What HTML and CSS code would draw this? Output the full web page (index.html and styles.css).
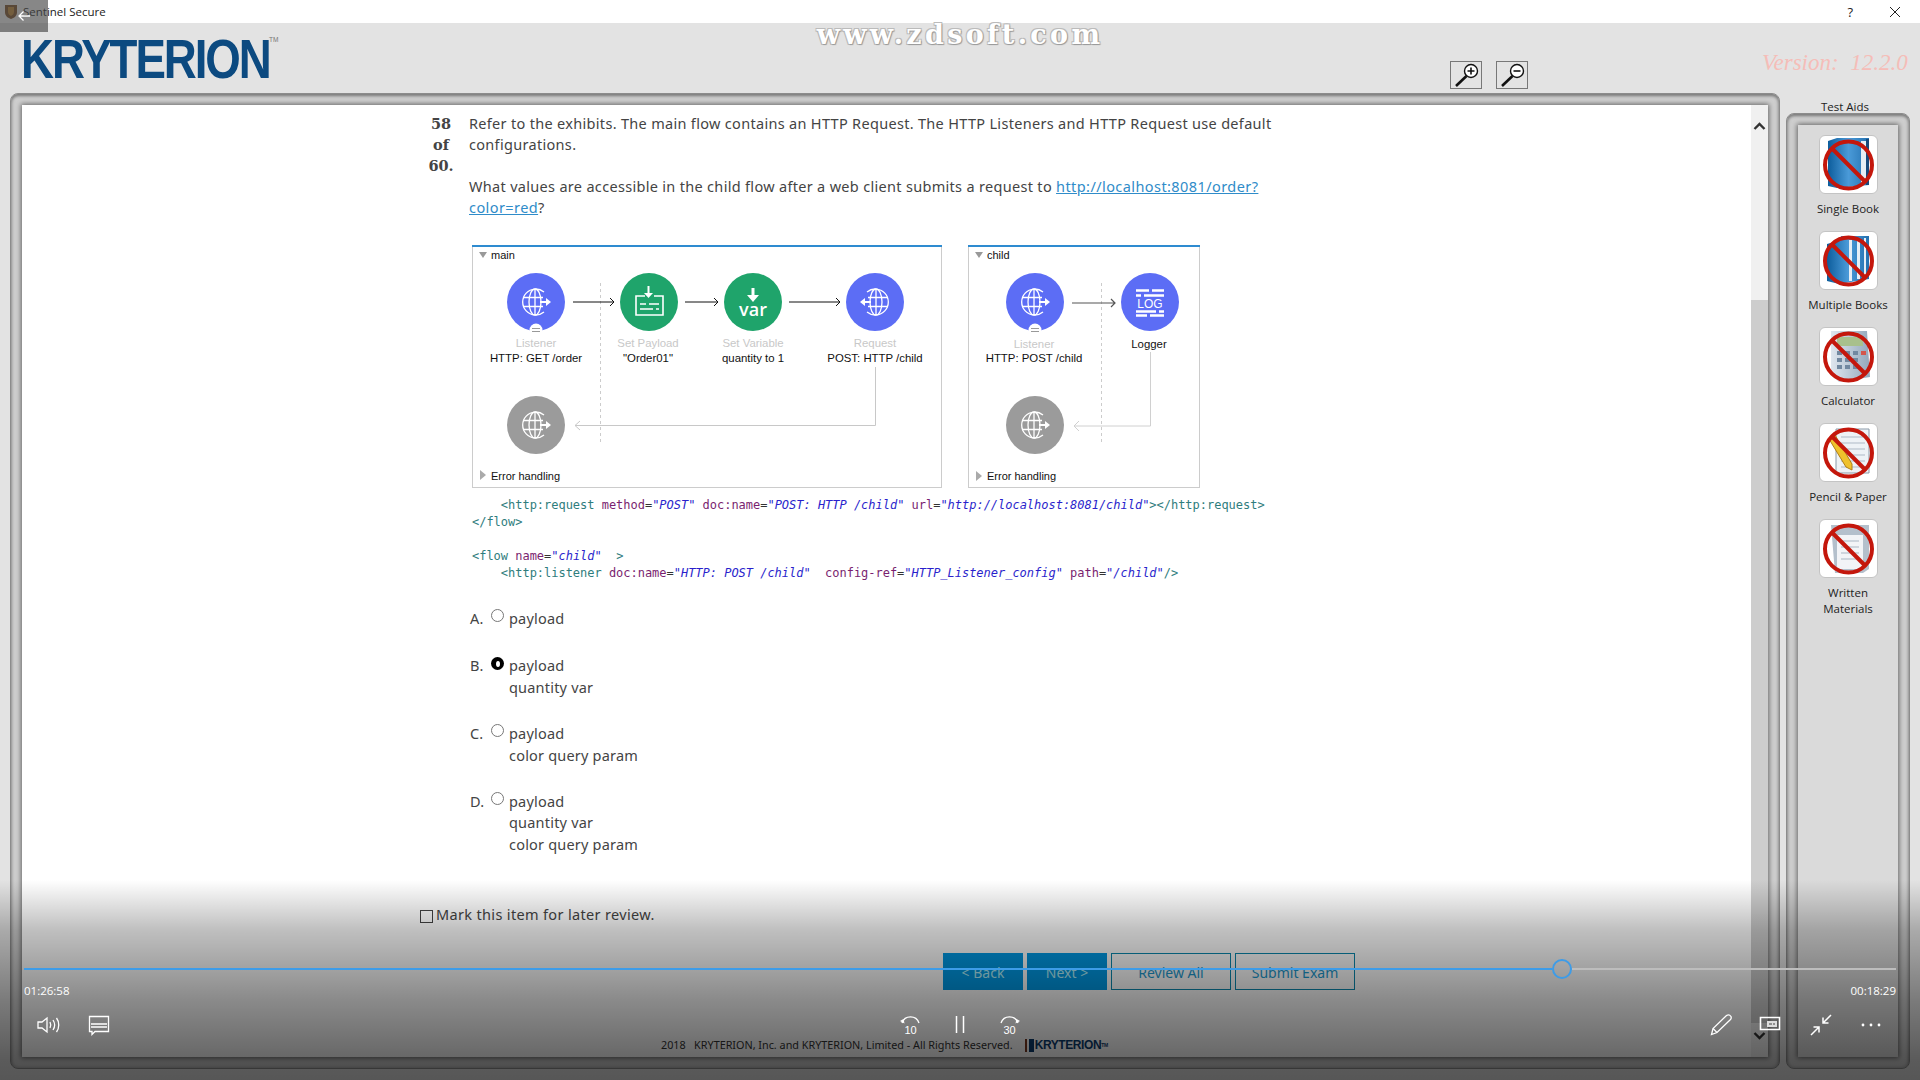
FILE: index.html
```html
<!DOCTYPE html>
<html lang="en">
<head>
<meta charset="utf-8">
<title>Sentinel Secure</title>
<link rel="stylesheet" href="styles.css">
</head>
<body>
<div class="titlebar">
  <svg class="shield" width="14" height="16" viewBox="0 0 14 16"><path d="M1 1h12v7c0 4-3 6-6 7-3-1-6-3-6-7z" fill="#7d4a1e"/><path d="M4 3h6v5c0 2-1.500 3-3 4-1.500-1-3-2-3-4z" fill="#c9892f"/></svg>
  <span class="title">Sentinel Secure</span>
  <span class="win-help">?</span>
  <svg class="win-close" width="12" height="12" viewBox="0 0 12 12"><path d="M1 1l10 10M11 1L1 11" stroke="#222" fill="none"/></svg>
</div>
<header class="header">
  <div class="logo">KRYTERION<sup class="tm">TM</sup></div>
  <div class="zooms">
    <button class="zoom-btn"><svg width="30" height="26" viewBox="0 0 30 26"><circle cx="20" cy="9" r="6.500" fill="#fff" stroke="#111" stroke-width="1.400"/><path d="M16.500 9h7M20 5.500v7" stroke="#111" stroke-width="1.600"/><path d="M15.500 14L5 24" stroke="#111" stroke-width="2.600"/></svg></button>
    <button class="zoom-btn"><svg width="30" height="26" viewBox="0 0 30 26"><circle cx="20" cy="9" r="6.500" fill="#fff" stroke="#111" stroke-width="1.400"/><path d="M16.500 9h7" stroke="#111" stroke-width="1.600"/><path d="M15.500 14L5 24" stroke="#111" stroke-width="2.600"/></svg></button>
  </div>
  <div class="version">Version: &nbsp;12.2.0</div>
</header>
<main class="workspace">
  <section class="frame main-frame">
    <div class="sheet">
      <div class="content">
        <div class="question">
          <div class="qnum">58<br>of<br>60.</div>
          <div class="qbody">
            <p class="qtext">Refer to the exhibits. The main flow contains an HTTP Request. The HTTP Listeners and HTTP Request use default<br>configurations.</p>
            <p class="qtext">What values are accessible in the child flow after a web client submits a request to <a class="link" href="#">http://localhost:8081/order?<br>color=red</a>?</p>
            <div class="exhibits">
              <svg class="flow" width="470" height="243" viewBox="472 245 470 243">
                <defs>
                  <g id="globe" fill="none" stroke="#fff" stroke-width="1.300">
                    <path d="M8-10A13 13 0 1 0 8 10"/>
                    <ellipse cx="-1" cy="0" rx="6" ry="13"/>
                    <path d="M-1-13V13M-13-4.500H7M-13 4.500H7"/>
                    <path d="M4 0H11" stroke-width="2"/>
                    <path d="M10-4L15 0L10 4z" fill="#fff" stroke="none"/>
                  </g>
                </defs>
                <rect x="472.500" y="245.500" width="469" height="242" fill="#fff" stroke="#ccc"/>
                <rect x="472" y="245" width="470" height="2" fill="#2e8bd0"/>
                <path d="M479 252h8l-4 6z" fill="#999"/>
                <text class="ft" x="491" y="259">main</text>
                <path d="M600.500 283V445" stroke="#ccc" stroke-dasharray="3 3"/>
                <circle cx="536" cy="302" r="29" fill="#5c6df5"/>
                <use href="#globe" x="536" y="302"/>
                <circle cx="536" cy="330" r="6.500" fill="#fff"/>
                <path d="M532 328.500h8M540 331.500h-8" stroke="#999"/>
                <circle cx="649" cy="302" r="29" fill="#1fa46b"/>
                <path d="M645 296h-9v19h27v-19h-9" fill="none" stroke="#fff" stroke-width="1.600"/>
                <path d="M648.500 286v9" stroke="#fff" stroke-width="2"/>
                <path d="M644 293l4.500 5 4.500-5z" fill="#fff"/>
                <path d="M640 304h6M649 304h10M640 309h13M656 309h3" stroke="#fff" stroke-width="1.500"/>
                <circle cx="753" cy="302" r="29" fill="#1fa46b"/>
                <path d="M753 288v9" stroke="#fff" stroke-width="3"/>
                <path d="M747 295h12l-6 7z" fill="#fff"/>
                <text class="var" x="753" y="316">var</text>
                <circle cx="875" cy="302" r="29" fill="#5c6df5"/>
                <use href="#globe" transform="translate(875 302) scale(-1 1)"/>
                <path d="M573 302H614M610 298l4 4-4 4M685 302H718M714 298l4 4-4 4M789 302H840M836 298l4 4-4 4" fill="none" stroke="#111"/>
                <text class="fl" x="536" y="347">Listener</text>
                <text class="fb" x="536" y="362">HTTP: GET /order</text>
                <text class="fl" x="648" y="347">Set Payload</text>
                <text class="fb" x="648" y="362">"Order01"</text>
                <text class="fl" x="753" y="347">Set Variable</text>
                <text class="fb" x="753" y="362">quantity to 1</text>
                <text class="fl" x="875" y="347">Request</text>
                <text class="fb" x="875" y="362">POST: HTTP /child</text>
                <path d="M875.500 367V425.500H575M580 421l-5 4.500 5 4.500" fill="none" stroke="#c8c8c8"/>
                <circle cx="536" cy="425" r="29" fill="#9b9b9b"/>
                <use href="#globe" x="536" y="425"/>
                <path d="M480 470l6 5-6 5z" fill="#aaa"/>
                <text class="ft" x="491" y="480">Error handling</text>
              </svg>
              <svg class="flow" width="232" height="243" viewBox="968 245 232 243">
                <rect x="968.500" y="246.500" width="231" height="241" fill="#fff" stroke="#ccc"/>
                <rect x="968" y="245" width="232" height="2" fill="#2e8bd0"/>
                <path d="M975 252h8l-4 6z" fill="#999"/>
                <text class="ft" x="987" y="259">child</text>
                <path d="M1101.500 283V445" stroke="#ccc" stroke-dasharray="3 3"/>
                <circle cx="1035" cy="302" r="29" fill="#5c6df5"/>
                <use href="#globe" x="1035" y="302"/>
                <circle cx="1035" cy="330" r="6.500" fill="#fff"/>
                <path d="M1031 328.500h8M1039 331.500h-8" stroke="#999"/>
                <circle cx="1150" cy="302" r="29" fill="#5c6df5"/>
                <path d="M1136 290.500h13M1152 290.500h12M1136 295.500h5M1144 295.500h20M1136 311.500h20M1159 311.500h5M1136 315.500h11M1150 315.500h14" stroke="#fff" stroke-width="2.400"/>
                <text class="log" x="1150" y="308">LOG</text>
                <path d="M1072 303H1115M1111 299l4 4-4 4" fill="none" stroke="#555" stroke-width="1.200"/>
                <text class="fl" x="1034" y="348">Listener</text>
                <text class="fb" x="1034" y="362">HTTP: POST /child</text>
                <text class="fb" x="1149" y="348">Logger</text>
                <path d="M1150.500 352V426H1074M1079 421l-5 5 5 5" fill="none" stroke="#d0d0d0"/>
                <circle cx="1035" cy="425" r="29" fill="#9b9b9b"/>
                <use href="#globe" x="1035" y="425"/>
                <path d="M976 471l6 5-6 5z" fill="#aaa"/>
                <text class="ft" x="987" y="480">Error handling</text>
              </svg>
            </div>
            <pre class="code"><span class="t">    &lt;http:request </span><span class="a">method</span>=<span class="v">"POST"</span> <span class="a">doc:name</span>=<span class="v">"POST: HTTP /child"</span> <span class="a">url</span>=<span class="v">"http://localhost:8081/child"</span><span class="t">&gt;&lt;/http:request&gt;</span>
<span class="t">&lt;/flow&gt;</span>

<span class="t">&lt;flow </span><span class="a">name</span>=<span class="v">"child"</span>  <span class="t">&gt;</span>
<span class="t">    &lt;http:listener </span><span class="a">doc:name</span>=<span class="v">"HTTP: POST /child"</span>  <span class="a">config-ref</span>=<span class="v">"HTTP_Listener_config"</span> <span class="a">path</span>=<span class="v">"/child"</span><span class="t">/&gt;</span></pre>
            <div class="options">
              <div class="option"><span class="letter">A.</span><span class="radio"></span><span class="otext">payload</span></div>
              <div class="option"><span class="letter">B.</span><span class="radio on"></span><span class="otext">payload<br>quantity var</span></div>
              <div class="option"><span class="letter">C.</span><span class="radio"></span><span class="otext">payload<br>color query param</span></div>
              <div class="option"><span class="letter">D.</span><span class="radio"></span><span class="otext">payload<br>quantity var<br>color query param</span></div>
            </div>
          </div>
        </div>
        <label class="mark"><span class="check"></span>Mark this item for later review.</label>
        <div class="nav">
          <button class="nbtn fill">&lt; Back</button>
          <button class="nbtn fill">Next &gt;</button>
          <button class="nbtn wide">Review All</button>
          <button class="nbtn wide">Submit Exam</button>
        </div>
        <div class="legal"><span>2018 &nbsp; KRYTERION, Inc. and KRYTERION, Limited - All Rights Reserved.</span><span class="mini-logo"><i class="mini-k"></i>KRYTERION<sup class="mini-tm">TM</sup></span></div>
      </div>
      <div class="scrollbar">
        <svg class="chev" width="17" height="17" viewBox="0 0 17 17"><path d="M3.500 11L8.500 6l5 5" fill="none" stroke="#333" stroke-width="2.400"/></svg>
        <div class="thumb"></div>
        <svg class="chev" width="17" height="17" viewBox="0 0 17 17"><path d="M3.500 6l5 5 5-5" fill="none" stroke="#333" stroke-width="2.400"/></svg>
      </div>
    </div>
  </section>
  <aside class="aids">
    <div class="aids-title">Test Aids</div>
    <div class="frame aids-frame">
      <div class="aids-list">
        <div class="aid">
          <div class="aid-box"><svg width="59" height="59" viewBox="0 0 59 59">
            <defs>
              <linearGradient id="bk" x1="0" x2="1"><stop offset="0" stop-color="#0d5d9c"/><stop offset=".5" stop-color="#4a9ad8"/><stop offset="1" stop-color="#2471b0"/></linearGradient>
              <linearGradient id="cal" x1="0" x2="1"><stop offset="0" stop-color="#dfe6ee"/><stop offset="1" stop-color="#93a8bc"/></linearGradient>
              <g id="no" fill="none" stroke="#c4170c" stroke-width="4"><circle cx="29.500" cy="30" r="23.500"/><path d="M13 13.500L46 46.500"/></g>
            </defs>
            <path d="M9 6L18 3H50V50L18 53L9 51z" fill="url(#bk)"/><path d="M42 6h5v42h-5z" fill="#e6eef5"/><path d="M47 4h3v46h-3z" fill="#174a7c"/><use href="#no"/></svg></div>
          <div class="aid-label">Single Book</div>
        </div>
        <div class="aid">
          <div class="aid-box"><svg width="59" height="59" viewBox="0 0 59 59"><path d="M8 13L22 9V5H50V48L20 53L8 50z" fill="url(#bk)"/><path d="M30 9h3v41h-3zM38 8h3v40h-3zM45 7h2v38h-2z" fill="#e6eef5"/><use href="#no"/></svg></div>
          <div class="aid-label">Multiple Books</div>
        </div>
        <div class="aid">
          <div class="aid-box"><svg width="59" height="59" viewBox="0 0 59 59"><path d="M12 4H48L51 50L20 55L12 48z" fill="url(#cal)"/><path d="M18 10L44 10V19L18 19z" fill="#a8c08c"/><path d="M18 24h5v4h-5zM26 24h5v4h-5zM34 24h5v4h-5zM18 31h5v4h-5zM26 31h5v4h-5zM34 31h5v4h-5zM18 38h5v4h-5zM26 38h5v4h-5zM34 38h5v4h-5z" fill="#7188a0"/><path d="M42 24h5v4h-5z" fill="#d4574c"/><use href="#no"/></svg></div>
          <div class="aid-label">Calculator</div>
        </div>
        <div class="aid">
          <div class="aid-box"><svg width="59" height="59" viewBox="0 0 59 59"><path d="M17 6H50V50H17z" fill="#eef2f6" stroke="#8b9aa8"/><path d="M22 14h24M22 20h24M22 26h24M22 32h24M22 38h24M22 44h24" stroke="#aeb9c6"/><path d="M10 16L16 12L33 41L33 47L27 44z" fill="#efc12c" stroke="#b17f16"/><use href="#no"/></svg></div>
          <div class="aid-label">Pencil &amp; Paper</div>
        </div>
        <div class="aid">
          <div class="aid-box"><svg width="59" height="59" viewBox="0 0 59 59"><path d="M12 6H50V50L44 54H16z" fill="#b4c0cc"/><path d="M18 16H44V50H18z" fill="#f2f4f7"/><path d="M22 22h18M22 28h18M22 34h18M22 40h18" stroke="#a9b6c3"/><use href="#no"/></svg></div>
          <div class="aid-label">Written<br>Materials</div>
        </div>
      </div>
    </div>
  </aside>
</main>
<div class="watermark">www.zdsoft.com</div>
<div class="back-tab"><svg width="14" height="12" viewBox="0 0 14 12"><path d="M13 6H2M6.500 1.500L2 6l4.500 4.500" fill="none" stroke="#fff" stroke-width="1.300"/></svg></div>
<div class="player">
  <div class="track"><div class="played"></div><div class="knob"></div><div class="rest"></div></div>
  <div class="times"><span>01:26:58</span><span>00:18:29</span></div>
  <div class="controls">
    <div class="group">
      <span class="cbtn"><svg width="24" height="24" viewBox="0 0 24 24"><path d="M1 9v6h4l5 4V5L5 9z" fill="none" stroke="#fff" stroke-width="1.300"/><path d="M13 9c1 2 1 4 0 6M16 7c2 3 2 7 0 10M19.500 5c3 4 3 10 0 14" fill="none" stroke="#fff" stroke-width="1.300"/></svg></span>
      <span class="cbtn"><svg width="24" height="24" viewBox="0 0 24 24"><path d="M2.500 3.500h19v15H8l-3 3v-3H2.500z" fill="none" stroke="#fff" stroke-width="1.300"/><path d="M4 11h16M4 14h16" stroke="#fff" stroke-width="1.300"/></svg></span>
    </div>
    <div class="group">
      <span class="cbtn"><svg width="24" height="24" viewBox="0 0 24 24"><path d="M4 10A9 9 0 0 1 21 10" fill="none" stroke="#fff" stroke-width="1.300"/><path d="M2 8L5.500 6L6.500 10.500z" fill="#fff"/><text class="seek" x="12.500" y="21">10</text></svg></span>
      <span class="cbtn"><svg width="24" height="24" viewBox="0 0 24 24"><path d="M8.500 3v17M15.500 3v17" stroke="#fff" stroke-width="1.500"/></svg></span>
      <span class="cbtn"><svg width="24" height="24" viewBox="0 0 24 24"><path d="M3 10A9 9 0 0 1 20 10" fill="none" stroke="#fff" stroke-width="1.300"/><path d="M22 8L18.500 6L17.500 10.500z" fill="#fff"/><text class="seek" x="11.500" y="21">30</text></svg></span>
    </div>
    <div class="group">
      <span class="cbtn"><svg width="24" height="24" viewBox="0 0 24 24"><path d="M2.500 21.500L4 15.500L17.500 2.500C19 1.500 21 2 22 3.500C22.500 5 22 6 21.500 6.500L8 19.500z" fill="none" stroke="#fff" stroke-width="1.300"/><path d="M4 15.500L8 19.500" stroke="#fff" stroke-width="1.300"/></svg></span>
      <span class="cbtn"><svg width="24" height="24" viewBox="0 0 24 24"><path d="M1.500 4.500h19v12h-19z" fill="none" stroke="#fff" stroke-width="1.600"/><path d="M8 8h10v6H8z" fill="#ddd"/><path d="M10 11h3M14 11h2" stroke="#444"/></svg></span>
      <span class="cbtn"><svg width="24" height="24" viewBox="0 0 24 24"><path d="M22 2L14 10M14 4.500V10H19.500M2 22L10 14M4.500 14H10V19.500" fill="none" stroke="#fff" stroke-width="1.500"/></svg></span>
      <span class="cbtn"><svg width="24" height="24" viewBox="0 0 24 24"><circle cx="4" cy="12" r="1.400" fill="#fff"/><circle cx="12" cy="12" r="1.400" fill="#fff"/><circle cx="20" cy="12" r="1.400" fill="#fff"/></svg></span>
    </div>
  </div>
</div>
</body>
</html>
```
FILE: styles.css
```css
* { box-sizing: border-box; }
html, body { margin: 0; height: 100%; }
body {
  width: 1920px;
  height: 1080px;
  overflow: hidden;
  position: relative;
  background: #e3e3e3;
  font-family: "Open Sans", "Liberation Sans", sans-serif;
  display: flex;
  flex-direction: column;
}
.titlebar {
  height: 23px;
  flex: none;
  background: #fff;
  display: flex;
  align-items: center;
  padding: 0 19px 0 4px;
  font-size: 11.500px;
  color: #222;
}
.shield { flex: none; }
.title { margin-left: 5px; }
.win-help { margin-left: auto; font-size: 13px; margin-right: 36px; }
.header {
  height: 70px;
  flex: none;
  display: flex;
  align-items: flex-start;
  padding: 0 13px 0 21px;
  position: relative;
}
.logo {
  font-family: "Liberation Sans", sans-serif;
  font-weight: 700;
  font-size: 56px;
  line-height: 44px;
  height: 44px;
  margin-top: 13px;
  color: #0c4a80;
  letter-spacing: -2.500px;
  width: 280px;
  transform: scaleX(.815);
  transform-origin: left top;
  white-space: nowrap;
}
.tm {
  font-size: 8px;
  line-height: 8px;
  letter-spacing: 0;
  font-weight: 400;
  color: #777;
  vertical-align: 36px;
  margin-left: -1px;
}
.zooms {
  margin-left: auto;
  margin-top: 38px;
  margin-right: 234px;
  display: flex;
  gap: 14px;
}
.zoom-btn {
  width: 32px;
  height: 28px;
  padding: 0;
  border: 1px solid #777;
  background: #e3e3e3;
  display: flex;
  align-items: center;
  justify-content: center;
}
.version {
  width: 145px;
  margin-top: 27px;
  text-align: right;
  font: italic 23px "Liberation Serif", serif;
  color: #f5bdb8;
  white-space: nowrap;
}
.workspace {
  flex: none;
  height: 976px;
  display: flex;
  padding: 0 10px;
  gap: 6px;
}
.frame {
  border: 1px solid #8c8c8c;
  border-radius: 8px;
  padding: 11px;
  background: #cfcfcf;
  box-shadow: inset 0 2px 3px #7d7d7d, inset 0 0 4px #999;
}
.main-frame { width: 1770px; height: 976px; }
.sheet {
  height: 100%;
  background: #fff;
  display: flex;
  box-shadow: 0 0 5px 1px #666;
}
.content {
  flex: 1;
  padding-top: 8px;
  color: #444;
  font: 14.500px/21px "Noto Sans", "Liberation Sans", sans-serif;
}
.question { display: flex; padding-left: 403px; }
.qnum {
  width: 32px;
  margin-right: 11px;
  text-align: center;
  font: 700 14.500px/21px "DejaVu Serif", serif;
  color: #444;
}
.qbody { flex: none; width: 830px; }
.qtext { margin: 0 0 21px 1px; white-space: nowrap; letter-spacing: .31px; }
.link { color: #2f8cc9; letter-spacing: .42px; }
.exhibits {
  display: flex;
  gap: 26px;
  margin: 27px 0 0 4px;
}
.flow { display: block; flex: none; }
.ft { font: 11px "Liberation Sans", sans-serif; fill: #111; }
.fb { font: 11.400px "Liberation Sans", sans-serif; fill: #111; text-anchor: middle; }
.fl { font: 11.400px "Liberation Sans", sans-serif; fill: #c8c8c8; text-anchor: middle; }
.var { font: 600 18px "Open Sans", sans-serif; fill: #fff; text-anchor: middle; }
.log { font: 12px "Liberation Sans", sans-serif; fill: #fff; text-anchor: middle; }
.code {
  margin: 9px 0 0 4px;
  font: 12px/17px "DejaVu Sans Mono", monospace;
  letter-spacing: -.02px;
  color: #333;
}
.t { color: #2f7d7d; }
.a { color: #7a1f70; }
.v { color: #2a1fcc; font-style: italic; }
.options {
  margin: 26px 0 0 2px;
  display: flex;
  flex-direction: column;
  gap: 25px;
  line-height: 21.400px;
  letter-spacing: .2px;
}
.option { display: flex; align-items: flex-start; }
.option:first-child { margin-bottom: 1px; }
.letter { width: 21px; flex: none; }
.radio {
  flex: none;
  width: 13px;
  height: 13px;
  margin: 1px 5px 0 0;
  border: 1px solid #777;
  border-radius: 50%;
  background: #fff;
}
.radio.on { background: #000; border: 0; display: flex; align-items: center; justify-content: center; margin-top: 2px; }
.radio.on::after { content: ""; width: 4px; height: 6px; border-radius: 50%; background: #fff; }
.mark {
  display: flex;
  align-items: center;
  margin: 49px 0 0 398px;
  letter-spacing: .34px;
}
.check {
  width: 13px;
  height: 13px;
  margin: 3px 3px 0 0;
  border: 1px solid #444;
  background: #fff;
}
.nav {
  display: flex;
  gap: 4px;
  margin: 28px 0 0 921px;
}
.nbtn {
  height: 37px;
  padding: 2px 0 0;
  font: 14px "Noto Sans", sans-serif;
  border: 1px solid #0a8ab0;
  background: transparent;
  color: #1d9ad0;
}
.nbtn.fill { width: 80px; background: #009ae6; border-color: #009ae6; color: #b4f4ff; }
.nbtn.wide { width: 120px; }
.legal {
  margin: 47px 0 0 639px;
  display: flex;
  align-items: center;
  font: 10.800px/16px "Noto Sans", sans-serif;
  color: #333;
  white-space: nowrap;
}
.mini-logo {
  margin-left: 12px;
  display: flex;
  align-items: center;
  font: 700 12px/16px "Liberation Sans", sans-serif;
  letter-spacing: -.400px;
  color: #0b3c6e;
}
.mini-k {
  width: 9px;
  height: 13px;
  margin-right: 1px;
  background: linear-gradient(90deg, #7a3a22 0 20%, transparent 20% 40%, #0b3c6e 40%);
}
.mini-tm { font-size: 5px; line-height: 5px; vertical-align: 8px; }
.scrollbar {
  flex: none;
  width: 17px;
  background: #f0f0f0;
  display: flex;
  flex-direction: column;
}
.chev { flex: none; margin-top: 13px; }
.scrollbar .chev:last-child { margin: 4px 0 13px; }
.thumb { flex: 1; margin-top: 165px; background: #cdcdcd; }
.aids { width: 124px; display: flex; flex-direction: column; }
.aids-title {
  height: 20px;
  padding: 6px 6px 0 0;
  text-align: center;
  font-size: 11.500px;
  line-height: 16px;
  color: #222;
}
.aids-frame { flex: 1; }
.aids-list {
  height: 100%;
  background: #dadada;
  box-shadow: 0 0 5px 1px #666;
  padding-top: 10px;
  display: flex;
  flex-direction: column;
  align-items: center;
}
.aid { height: 96px; width: 100%; display: flex; flex-direction: column; align-items: center; }
.aid-box {
  width: 59px;
  height: 59px;
  flex: none;
  background: #fff;
  border: 1px solid #c4c4c4;
  border-radius: 6px;
  display: flex;
  align-items: center;
  justify-content: center;
  overflow: hidden;
}
.aid-box svg { flex: none; }
.aid-label {
  margin-top: 7px;
  text-align: center;
  font-size: 11.500px;
  line-height: 16px;
  color: #222;
}
.watermark {
  position: absolute;
  left: 760px;
  top: 18px;
  width: 400px;
  text-align: center;
  font: 700 27px/34px "DejaVu Serif", serif;
  letter-spacing: 3.300px;
  color: #fff;
  white-space: nowrap;
  text-shadow: 1px 1px 1px #999, -1px -1px 0 #bbb, 1px -1px 0 #bbb, -1px 1px 0 #bbb;
}
.back-tab {
  position: absolute;
  left: 0;
  top: 0;
  width: 48px;
  height: 32px;
  background: rgba(70, 70, 70, .65);
  padding: 10px 0 0 17px;
}
.back-tab svg { display: block; }
.player {
  position: absolute;
  left: 0;
  right: 0;
  bottom: 0;
  height: 200px;
  padding: 0 24px 30px;
  display: flex;
  flex-direction: column;
  justify-content: flex-end;
  background: linear-gradient(180deg, rgba(0,0,0,0) 0, rgba(0,0,0,.25) 50px, rgba(0,0,0,.46) 120px, rgba(0,0,0,.6) 180px, rgba(0,0,0,.62) 200px);
  color: #fff;
}
.track { display: flex; align-items: center; height: 20px; }
.played { width: 1528px; height: 2px; background: #3d9ce8; }
.knob { width: 20px; height: 20px; flex: none; border: 2px solid #3d9ce8; border-radius: 50%; }
.rest { flex: 1; height: 2px; background: #bdbdbd; }
.times {
  display: flex;
  justify-content: space-between;
  margin-top: 4px;
  font-size: 11.500px;
  line-height: 16px;
}
.controls {
  display: grid;
  grid-template-columns: 1fr auto 1fr;
  margin-top: 1px;
  height: 50px;
}
.group { display: flex; }
.group:last-child { justify-content: flex-end; }
.cbtn { width: 50px; height: 50px; display: flex; align-items: center; justify-content: center; }
.seek { font: 11px "Liberation Sans", sans-serif; fill: #fff; text-anchor: middle; }
```
